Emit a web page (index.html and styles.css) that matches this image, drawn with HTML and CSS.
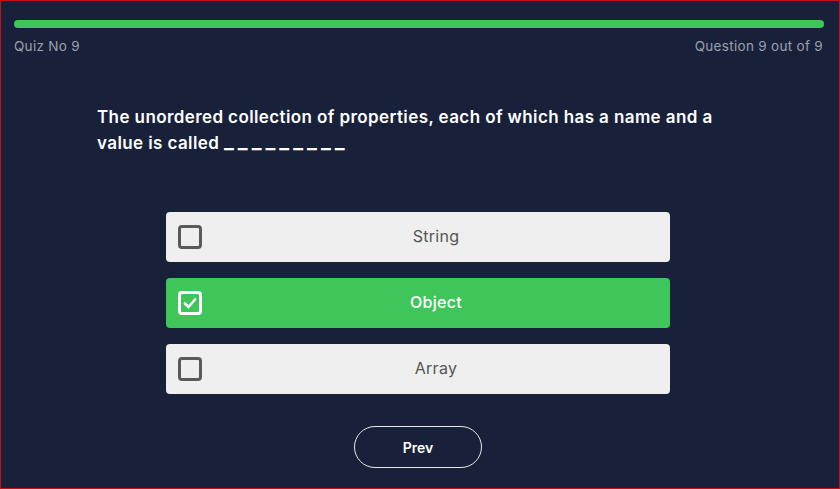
FILE: index.html
```
<!DOCTYPE html>
<html>
<head>
<meta charset="utf-8">
<link rel="stylesheet" href="styles.css">
</head>
<body>
<div class="page">
  <div class="progress"><div class="progress-fill"></div></div>
  <div class="meta">
    <span>Quiz No 9</span>
    <span>Question 9 out of 9</span>
  </div>
  <div class="question">The unordered collection of properties, each of which has a name and a value is called <span class="blank">_________</span></div>
  <div class="options">
    <div class="option">
      <span class="box"></span>
      <span class="label">String</span>
    </div>
    <div class="option selected">
      <span class="box"><svg width="14" height="12" viewBox="0 0 14 12"><path d="M2 6.5 L5.5 10 L12 2.5" fill="none" stroke="#fff" stroke-width="2.6" stroke-linecap="round" stroke-linejoin="round"/></svg></span>
      <span class="label">Object</span>
    </div>
    <div class="option">
      <span class="box"></span>
      <span class="label">Array</span>
    </div>
  </div>
  <div class="actions">
    <button class="btn">Prev</button>
  </div>
</div>
</body>
</html>
```
FILE: styles.css
```
* { box-sizing: border-box; }
html, body { margin: 0; padding: 0; }
body {
  width: 840px;
  height: 489px;
  background: #19213a;
  font-family: Inter, "Open Sans", sans-serif;
  overflow: hidden;
}
.page {
  width: 840px;
  height: 489px;
  border: 1px solid #c4101a;
  padding: 19px 15px 0 13px;
}
.progress {
  height: 8px;
  background: #3ec65b;
  border-radius: 4px;
}
.progress-fill { height: 100%; }
.meta {
  display: flex;
  justify-content: space-between;
  margin-top: 10px;
  font-size: 13.5px;
  color: #9aa0ae;
  letter-spacing: 0.3px;
  padding-right: 1px;
}
.question {
  margin: 50px 0 0 83px;
  width: 640px;
  font-size: 17px;
  font-weight: 600;
  line-height: 26px;
  color: #ffffff;
  letter-spacing: 0.4px;
}
.blank {
  font-size: 21px;
  line-height: 20px;
  letter-spacing: 4px;
  vertical-align: 1px;
}
.options {
  margin: 56px 0 0 152px;
  width: 504px;
  display: flex;
  flex-direction: column;
  gap: 16px;
}
.option {
  height: 50px;
  background: #efefef;
  border-radius: 4px;
  display: flex;
  align-items: center;
  padding-left: 12px;
}
.option.selected { background: #3ec65b; }
.box {
  width: 24px;
  height: 24px;
  border: 3px solid #5a5a5a;
  border-radius: 4px;
  display: flex;
  align-items: center;
  justify-content: center;
  flex: none;
}
.selected .box { border-color: #ffffff; }
.label {
  flex: 1;
  text-align: center;
  font-size: 16px;
  color: #555;
  letter-spacing: 0.3px;
  margin-bottom: 2px;
}
.selected .label { color: #fff; font-weight: 500; }
.actions {
  margin-top: 32px;
  display: flex;
  justify-content: center;
}
.btn {
  width: 128px;
  height: 42px;
  border: 1px solid #e8e8e8;
  border-radius: 21px;
  background: transparent;
  color: #fff;
  font-family: Inter, sans-serif;
  font-size: 14px;
  font-weight: 600;
  margin-right: 2px;
}
```
